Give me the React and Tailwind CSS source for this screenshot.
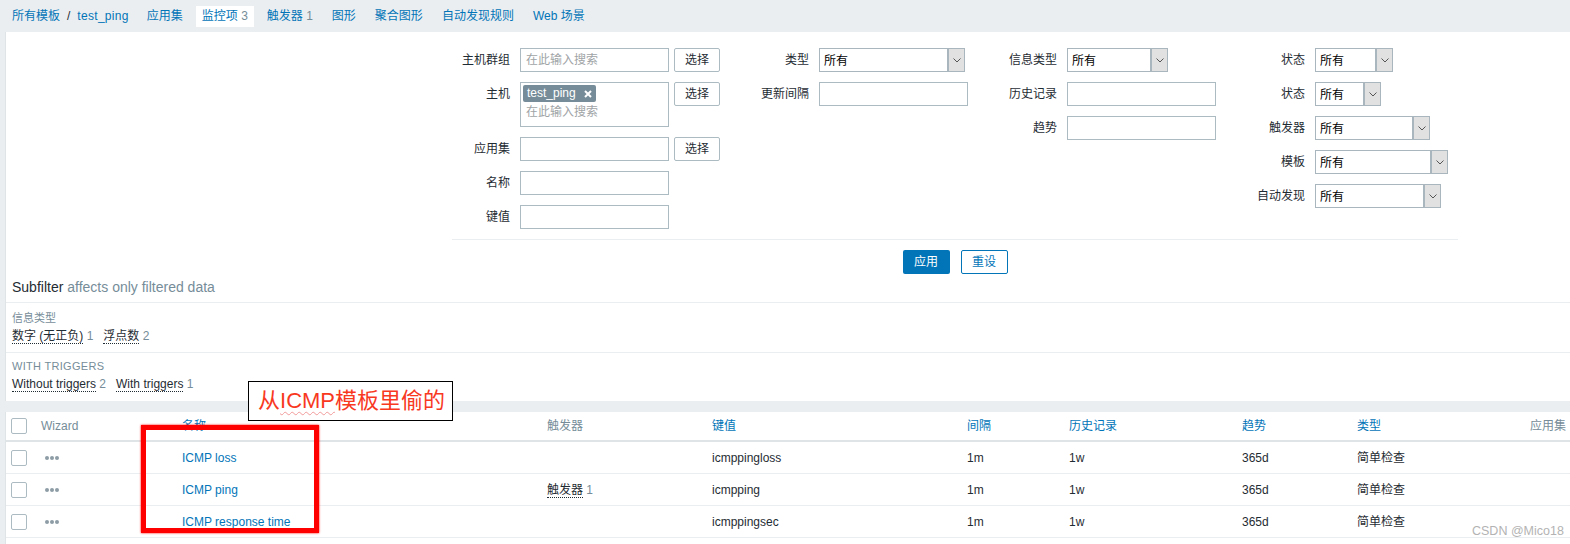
import React from "react";

const FONT = "font-['Liberation_Sans','Noto_Sans_CJK_SC',sans-serif]";

function Chevron() {
  return (
    <svg width="8" height="5" viewBox="0 0 8 5">
      <path d="M0.5 0.5 L4 4 L7.5 0.5" fill="none" stroke="#555" strokeWidth="1" />
    </svg>
  );
}

function Select({ w }) {
  return (
    <div className={`flex h-[24px] border border-[#a9b6be] bg-white ${w}`}>
      <span className="flex-1 pl-[4px] leading-[23px] text-black pt-[1px]">所有</span>
      <div className="w-[17px] h-full bg-[#e1e1e1] border-l-2 border-[#a9b6be] flex items-center justify-center">
        <Chevron />
      </div>
    </div>
  );
}

function Input({ placeholder }) {
  return (
    <div className="w-[149px] h-[24px] border border-[#acbbc2] bg-white px-[5px] leading-[22px] text-[#a0a4a6]">
      {placeholder}
    </div>
  );
}

function PickBtn() {
  return (
    <div className="ml-[5px] w-[46px] h-[24px] border border-[#acbbc2] rounded-[2px] bg-white text-center leading-[22px] text-[#1f2c33]">
      选择
    </div>
  );
}

function Row({ label, labelW = "w-[68px]", children }) {
  return (
    <div className="flex items-start">
      <div className={`${labelW} shrink-0 pr-[10px] text-right leading-[24px]`}>{label}</div>
      {children}
    </div>
  );
}

function Check() {
  return <div className="w-[16px] h-[16px] border border-[#acbbc2] rounded-[2px] bg-white" />;
}

function Dots() {
  return (
    <div className="flex gap-[1px] pl-[4px]">
      <div className="w-[4px] h-[4px] rounded-full bg-[#8d9ca5]" />
      <div className="w-[4px] h-[4px] rounded-full bg-[#8d9ca5]" />
      <div className="w-[4px] h-[4px] rounded-full bg-[#8d9ca5]" />
    </div>
  );
}

const COLS = "grid grid-cols-[30px_141px_365px_165px_255px_102px_173px_115px_173px_1fr]";

const rows = [
  { name: "ICMP loss", trig: false, key: "icmppingloss" },
  { name: "ICMP ping", trig: true, key: "icmpping" },
  { name: "ICMP response time", trig: false, key: "icmppingsec" },
];

export default function App() {
  return (
    <div className={`relative w-[1570px] h-[544px] overflow-hidden bg-[#ebeef0] text-[12px] text-[#1f2c33] ${FONT}`}>
      {/* top nav */}
      <div className="h-[32px] flex items-center pl-[12px]">
        <span className="text-[#0275b8]">所有模板</span>
        <span className="mx-[7px] text-[#1f2c33]">/</span>
        <span className="text-[#0275b8] tracking-[0.3px]">test_ping</span>
        <div className="flex items-center gap-[7px] ml-[12px]">
          <span className="px-[6px] h-[22px] leading-[22px] text-[#0275b8]">应用集</span>
          <span className="px-[6px] h-[21px] leading-[21px] bg-white text-[#0275b8]">
            监控项 <span className="text-[#768d99]">3</span>
          </span>
          <span className="px-[6px] h-[22px] leading-[22px] text-[#0275b8]">
            触发器 <span className="text-[#768d99]">1</span>
          </span>
          <span className="px-[6px] h-[22px] leading-[22px] text-[#0275b8]">图形</span>
          <span className="px-[6px] h-[22px] leading-[22px] text-[#0275b8]">聚合图形</span>
          <span className="px-[6px] h-[22px] leading-[22px] text-[#0275b8]">自动发现规则</span>
          <span className="px-[6px] h-[22px] leading-[22px] text-[#0275b8]">Web 场景</span>
        </div>
      </div>

      {/* filter panel */}
      <div className="ml-[5px] bg-white border-l border-[#dfe4e7]">
        <div className="pt-[16px] flex pl-[446px]">
          {/* col 1 */}
          <div className="flex flex-col gap-[10px] w-[268px]">
            <Row label="主机群组" labelW="w-[68px]">
              <Input placeholder="在此输入搜索" />
              <PickBtn />
            </Row>
            <Row label="主机" labelW="w-[68px]">
              <div className="w-[149px] h-[45px] border border-[#acbbc2] bg-white">
                <div className="ml-[2px] mt-[2px] inline-flex items-center h-[17px] px-[4px] rounded-[2px] bg-[#768d99] text-white leading-[17px]">
                  <span>test_ping</span>
                  <svg className="ml-[8px]" width="8" height="8" viewBox="0 0 8 8">
                    <path d="M1 1 L7 7 M7 1 L1 7" stroke="#fff" strokeWidth="2" />
                  </svg>
                </div>
                <div className="pl-[5px] leading-[20px] text-[#a0a4a6]">在此输入搜索</div>
              </div>
              <PickBtn />
            </Row>
            <Row label="应用集" labelW="w-[68px]">
              <Input />
              <PickBtn />
            </Row>
            <Row label="名称" labelW="w-[68px]">
              <Input />
            </Row>
            <Row label="键值" labelW="w-[68px]">
              <Input />
            </Row>
          </div>
          {/* col 2 */}
          <div className="flex flex-col gap-[10px] w-[248px]">
            <Row label="类型" labelW="w-[99px]">
              <Select w="w-[146px]" />
            </Row>
            <Row label="更新间隔" labelW="w-[99px]">
              <Input />
            </Row>
          </div>
          {/* col 3 */}
          <div className="flex flex-col gap-[10px] w-[248px]">
            <Row label="信息类型" labelW="w-[99px]">
              <Select w="w-[101px]" />
            </Row>
            <Row label="历史记录" labelW="w-[99px]">
              <Input />
            </Row>
            <Row label="趋势" labelW="w-[99px]">
              <Input />
            </Row>
          </div>
          {/* col 4 */}
          <div className="flex flex-col gap-[10px]">
            <Row label="状态" labelW="w-[99px]">
              <Select w="w-[78px]" />
            </Row>
            <Row label="状态" labelW="w-[99px]">
              <Select w="w-[66px]" />
            </Row>
            <Row label="触发器" labelW="w-[99px]">
              <Select w="w-[115px]" />
            </Row>
            <Row label="模板" labelW="w-[99px]">
              <Select w="w-[133px]" />
            </Row>
            <Row label="自动发现" labelW="w-[99px]">
              <Select w="w-[126px]" />
            </Row>
          </div>
        </div>
        <div className="ml-[446px] mt-[10px] w-[1006px] h-px bg-[#ebeef0]" />
        <div className="ml-[446px] mt-[10px] w-[1006px] flex justify-center gap-[11px]">
          <div className="w-[47px] h-[24px] rounded-[2px] bg-[#0275b8] text-white text-center leading-[24px]">应用</div>
          <div className="w-[47px] h-[24px] rounded-[2px] border border-[#0275b8] bg-white text-[#0275b8] text-center leading-[22px]">重设</div>
        </div>

        {/* subfilter */}
        <div className="h-[29px] pt-[4px] px-[6px] text-[14px] leading-[18px] border-b border-[#ebeef0]">
          <span className="text-[#1f2c33]">Subfilter</span> <span className="text-[#768d99]">affects only filtered data</span>
        </div>
        <div className="pt-[8px] pb-[7px] px-[6px] border-b border-[#ebeef0]">
          <div className="text-[11px] leading-[14px] text-[#768d99]">信息类型</div>
          <div className="mt-[2px] flex gap-[10px] leading-[18px]">
            <span>
              <span className="border-b border-dotted border-[#1f2c33]">数字 (无正负)</span>
              <span className="text-[#768d99]"> 1</span>
            </span>
            <span>
              <span className="border-b border-dotted border-[#1f2c33]">浮点数</span>
              <span className="text-[#768d99]"> 2</span>
            </span>
          </div>
        </div>
        <div className="pt-[6px] pb-[8px] px-[6px]">
          <div className="text-[11px] leading-[14px] text-[#768d99] tracking-[0.3px]">WITH TRIGGERS</div>
          <div className="mt-[2px] flex gap-[10px] leading-[18px]">
            <span>
              <span className="border-b border-dotted border-[#1f2c33]">Without triggers</span>
              <span className="text-[#768d99]"> 2</span>
            </span>
            <span>
              <span className="border-b border-dotted border-[#1f2c33]">With triggers</span>
              <span className="text-[#768d99]"> 1</span>
            </span>
          </div>
        </div>
      </div>

      {/* table panel */}
      <div className="ml-[5px] mt-[11px] bg-white border-l border-[#dfe4e7] h-[200px]">
        <div className={`${COLS} h-[30px] items-center border-b-2 border-[#dfe4e7]`}>
          <div className="pl-[5px]"><Check /></div>
          <div className="pl-[5px] text-[#768d99]">Wizard</div>
          <div className="pl-[5px] text-[#0275b8] flex items-center">
            名称
            <span className="ml-[6px] mt-[2px] inline-block w-0 h-0 border-l-[4px] border-r-[4px] border-b-[5px] border-l-transparent border-r-transparent border-b-[#0275b8]" />
          </div>
          <div className="pl-[5px] text-[#768d99]">触发器</div>
          <div className="pl-[5px] text-[#0275b8]">键值</div>
          <div className="pl-[5px] text-[#0275b8]">间隔</div>
          <div className="pl-[5px] text-[#0275b8]">历史记录</div>
          <div className="pl-[5px] text-[#0275b8]">趋势</div>
          <div className="pl-[5px] text-[#0275b8]">类型</div>
          <div className="pl-[5px] text-[#768d99]">应用集</div>
        </div>
        {rows.map((r) => (
          <div key={r.key} className={`${COLS} h-[32px] items-center border-b border-[#ebeef0]`}>
            <div className="pl-[5px]"><Check /></div>
            <div className="pl-[5px]"><Dots /></div>
            <div className="pl-[5px] text-[#0275b8]">{r.name}</div>
            <div className="pl-[5px]">
              {r.trig && (
                <span>
                  <span className="border-b border-dotted border-[#1f2c33]">触发器</span>
                  <span className="text-[#768d99]"> 1</span>
                </span>
              )}
            </div>
            <div className="pl-[5px]">{r.key}</div>
            <div className="pl-[5px]">1m</div>
            <div className="pl-[5px]">1w</div>
            <div className="pl-[5px]">365d</div>
            <div className="pl-[5px]">简单检查</div>
            <div className="pl-[5px]" />
          </div>
        ))}
      </div>

      {/* annotations */}
      <div className="absolute left-[141px] top-[425px] w-[178px] h-[108px] border-[5px] border-[#ff0000] shadow-[0_0_2px_#ff0000]" />
      <div className="absolute left-[248px] top-[381px] w-[205px] h-[40px] border border-black bg-white pl-[9px] text-[22px] leading-[38px] text-[#f8391f]">
        从<span className="underline decoration-wavy decoration-[#f29a9a] decoration-1 underline-offset-[3px]">ICMP</span>模板里偷的
      </div>
      <div className="absolute left-[1472px] top-[523px] text-[12.5px] leading-[16px] text-[#b3b3b3]">CSDN @Mico18</div>
    </div>
  );
}
